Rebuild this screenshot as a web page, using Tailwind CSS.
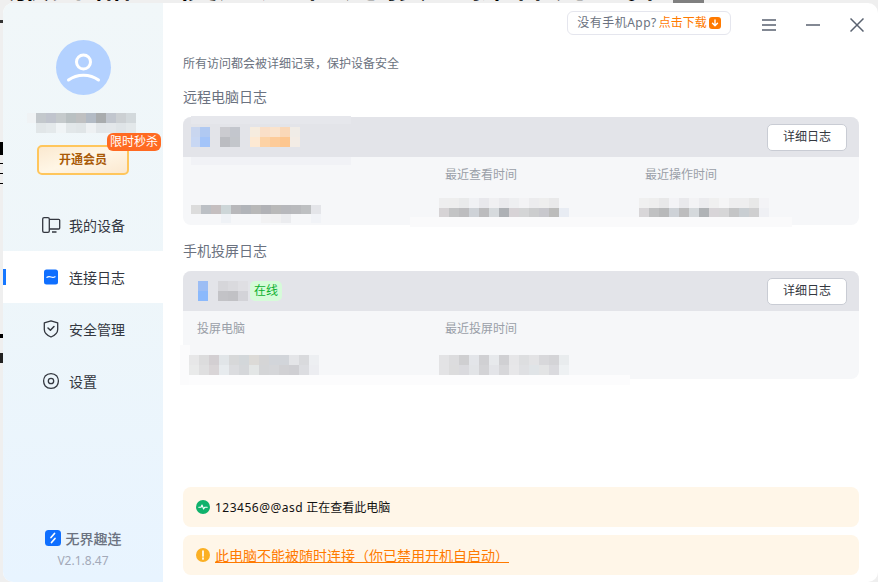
<!DOCTYPE html>
<html lang="zh-CN">

<head>
    <meta charset="UTF-8">
    <meta name="viewport" content="width=device-width, initial-scale=1.0">
    <script src="https://cdn.jsdelivr.net/npm/@tailwindcss/browser@4"></script>
    <title>连接日志</title>
</head>

<body class="relative h-[582px] w-[878px] overflow-hidden bg-[#efefef] font-['Noto_Sans','Noto_Sans_CJK_SC',sans-serif]">
    <!-- desktop behind the window, only slivers of it show -->
    <div class="absolute left-[8px] top-[-40px] whitespace-nowrap text-[42px] leading-[42px] text-black">服务器的使用远程连接的操作方式和</div>
    <div class="absolute left-[673px] top-0 h-[3px] w-[31px] bg-[#808080]"></div>
    <div class="absolute left-0 top-[20px] h-[3px] w-[3px] bg-[#333333]"></div>
    <div class="absolute left-0 top-[142px] h-[13px] w-[3px] bg-black"></div>
    <div class="absolute left-0 top-[163px] h-px w-[3px] bg-black"></div>
    <div class="absolute left-0 top-[173px] h-px w-[3px] bg-black"></div>
    <div class="absolute left-0 top-[183px] h-px w-[3px] bg-black"></div>
    <div class="absolute left-0 top-[334px] h-1 w-[3px] bg-black"></div>
    <div class="absolute left-0 top-[353px] h-[10px] w-[3px] bg-[#222222]"></div>

    <!-- window -->
    <div class="absolute bottom-0 left-[3px] right-0 top-[3px] flex overflow-hidden rounded-[10px] bg-white">
        <aside class="flex w-[160px] flex-col bg-gradient-to-b from-[#f1f7f9] via-[#eef6fa] to-[#e8f4ff]">
            <div class="mx-auto mt-[37px] flex h-[55px] w-[55px] items-center justify-center rounded-full bg-[#b3d1ff]">
                <svg width="35" height="35" viewBox="0 0 35 35" fill="none" stroke="white" stroke-width="3" stroke-linecap="round">
                    <circle cx="17.5" cy="12" r="7"></circle>
                    <path d="M2.5 30 C11 23.5 24 23.5 32.5 30"></path>
                </svg>
            </div>

            <div class="ml-[24px] mt-[18px] grid grid-cols-[9px_repeat(10,10px)] auto-rows-[10px]">
                <span class="bg-[#f0f3f5]"></span><span class="bg-[#c3c8cc]"></span><span class="bg-[#c0c4cd]"></span><span class="bg-[#c5cacc]"></span><span class="bg-[#b9c0c2]"></span><span class="bg-[#bfc0c1]"></span><span class="bg-[#b3bbc5]"></span><span class="bg-[#a9acae]"></span><span class="bg-[#c1c6ce]"></span><span class="bg-[#ccd0d3]"></span><span class="bg-[#d3d9dc]"></span>
                <span></span><span class="bg-[#e1e6e8]"></span><span class="bg-[#e4e9eb]"></span><span class="bg-[#f0f4f6]"></span><span class="bg-[#e2e7e9]"></span><span class="bg-[#e0e5e7]"></span><span class="bg-[#eef1f3]"></span><span class="bg-[#e2e6e9]"></span><span class="bg-[#e3e7ea]"></span><span class="bg-[#dfe4e7]"></span><span class="bg-[#e3e8ea]"></span>
            </div>

            <button type="button" class="relative mx-auto mt-3 h-[30px] w-[92px] rounded-[5px] border-2 border-[#ffc65c] bg-gradient-to-br from-[#fbe9d0] via-[#fff6e6] to-[#fbe8cf] text-[12px] font-bold text-[#a95a07]">
                开通会员
                <span class="absolute left-[68px] top-[-14px] h-[18px] w-[54px] rounded-[6px] bg-[#ff6a22] text-center text-[12px] font-normal leading-[18px] text-white">限时秒杀</span>
            </button>

            <nav class="mt-[24px] text-[14px] text-[#33373f]">
                <a class="flex h-[52px] items-center gap-2 pl-[38px]">
                    <svg width="20" height="20" viewBox="0 0 20 20" fill="none" stroke="#33373f" stroke-width="1.3">
                        <rect x="1.7" y="2.7" width="6.6" height="14.6" rx="1.4"></rect>
                        <path d="M8.3 4.3 H17.7 A1 1 0 0 1 18.7 5.3 V13 A1 1 0 0 1 17.7 14 H8.3"></path>
                        <path d="M11 17 H15.5"></path>
                    </svg>
                    我的设备
                </a>
                <a class="relative flex h-[52px] items-center gap-2 bg-white pl-[38px]">
                    <span class="absolute left-0 top-[18px] h-4 w-[3px] bg-[#1677ff]"></span>
                    <svg width="20" height="20" viewBox="0 0 20 20" fill="none">
                        <rect x="3" y="2.5" width="14" height="15" rx="2.5" fill="#0f6fff"></rect>
                        <path d="M6 10.3 C7.4 9.2 8.6 9.4 10 10 C11.4 10.6 12.6 10.7 14 9.8" stroke="white" stroke-width="1.3" stroke-linecap="round"></path>
                    </svg>
                    连接日志
                </a>
                <a class="flex h-[52px] items-center gap-2 pl-[38px]">
                    <svg width="20" height="20" viewBox="0 0 20 20" fill="none" stroke="#33373f" stroke-width="1.3" stroke-linejoin="round" stroke-linecap="round">
                        <path d="M10 1.8 L16.7 3.8 V10.5 C16.7 14 13.5 16.5 10 18 C6.5 16.5 3.3 14 3.3 10.5 V3.8 Z"></path>
                        <path d="M7 9 L9.4 11.3 L13 7.6" stroke-width="1.5"></path>
                    </svg>
                    安全管理
                </a>
                <a class="flex h-[52px] items-center gap-2 pl-[38px]">
                    <svg width="20" height="20" viewBox="0 0 20 20" fill="none" stroke="#33373f" stroke-width="1.3" stroke-linejoin="round">
                        <path d="M10 2.6 C11.5 2.6 14.5 3.6 15.8 5 C16.8 6.5 17.4 8.5 17.4 10 C17.4 11.5 16.8 13.5 15.8 15 C14.5 16.4 11.5 17.4 10 17.4 C8.5 17.4 5.5 16.4 4.2 15 C3.2 13.5 2.6 11.5 2.6 10 C2.6 8.5 3.2 6.5 4.2 5 C5.5 3.6 8.5 2.6 10 2.6 Z"></path>
                        <circle cx="10" cy="10" r="2.7"></circle>
                    </svg>
                    设置
                </a>
            </nav>

            <div class="mt-auto pb-[13px] text-center">
                <div class="flex h-5 items-center justify-center gap-[5px] text-[14px] font-medium text-[#6b7280]">
                    <svg width="16" height="16" viewBox="0 0 16 16">
                        <rect width="16" height="16" rx="3.5" fill="#0f6fff"></rect>
                        <path d="M9.5 3.5 L6 7.5 M10 8.5 L6.5 12.5" fill="none" stroke="white" stroke-width="1.7" stroke-linecap="round"></path>
                    </svg>
                    无界趣连
                </div>
                <div class="mt-[5px] h-4 text-[12px] leading-4 text-[#a3a9b8]">V2.1.8.47</div>
            </div>
        </aside>

        <main class="relative flex flex-1 flex-col pb-[7px] pl-[20px] pr-[19px]">
            <header class="-mr-[19px] flex h-[49px] shrink-0 items-start justify-end pr-[14px] pt-[8px]">
                <a class="mr-[31px] flex h-[24px] w-[164px] items-center justify-center gap-[2px] rounded-[6px] border border-[#e5e6ee] text-[12px] text-[#6b7280]">
                    <span class="tracking-[0.5px]">没有手机App?</span>
                    <span class="text-[#ff7a00]">点击下载</span>
                    <span class="flex h-3 w-3 items-center justify-center rounded-[3px] bg-[#ff7a00]">
                        <svg width="8" height="8" viewBox="0 0 8 8" fill="none" stroke="white" stroke-width="1.4" stroke-linecap="round" stroke-linejoin="round"><path d="M4 1 V6.5 M1.5 4.2 L4 6.8 L6.5 4.2"></path></svg>
                    </span>
                </a>
                <div class="flex gap-[30px] pt-[7px]">
                    <svg width="14" height="14" viewBox="0 0 14 14" stroke="#5a6270" stroke-width="1.5"><path d="M0 2 H14 M0 7 H14 M0 12 H14"></path></svg>
                    <svg width="14" height="14" viewBox="0 0 14 14" stroke="#5a6270" stroke-width="1.5"><path d="M0 7 H14"></path></svg>
                    <svg width="14" height="14" viewBox="0 0 14 14" stroke="#5a6270" stroke-width="1.5"><path d="M0.5 0.5 L13.5 13.5 M13.5 0.5 L0.5 13.5"></path></svg>
                </div>
            </header>

            <p class="h-6 text-[12px] leading-6 text-[#6b7280]">所有访问都会被详细记录，保护设备安全</p>

            <h2 class="mb-2 mt-[9px] h-6 text-[14px] font-normal leading-6 text-[#6b7280]">远程电脑日志</h2>
            <section class="relative h-[108px] rounded-[8px] bg-[#f6f7f9]">
                <div class="flex h-10 items-center justify-between rounded-t-[8px] bg-[#e3e4e9] pl-[8px] pr-3">
                    <div class="grid grid-cols-[9px_repeat(10,10px)] auto-rows-[10px]">
                        <span class="bg-[#c9d6ef]"></span><span class="bg-[#b0c9f2]"></span><span></span><span class="bg-[#cbcbd0]"></span><span class="bg-[#c3c6cd]"></span><span></span><span class="bg-[#f6ecdf]"></span><span class="bg-[#fadfc8]"></span><span class="bg-[#fae3cd]"></span><span class="bg-[#fad8b8]"></span><span class="bg-[#f0ece7]"></span>
                        <span class="bg-[#c8d7f3]"></span><span class="bg-[#a3c4f9]"></span><span></span><span class="bg-[#bbbcc1]"></span><span class="bg-[#c3c6cb]"></span><span></span><span class="bg-[#fde9d3]"></span><span class="bg-[#fdd2a5]"></span><span class="bg-[#fdcb99]"></span><span class="bg-[#fdc68f]"></span><span class="bg-[#f3ece5]"></span>
                    </div>
                    <button type="button" class="h-[27px] w-[80px] rounded-[5px] border border-[#c9ccd4] bg-white text-[12px] text-[#33373f]">详细日志</button>
                </div>
                <div class="grid grid-cols-[254px_200px_1fr] pl-[8px] text-[12px] text-[#9a9fa8]">
                    <span></span>
                    <span class="mt-2 h-5 leading-5">最近查看时间</span>
                    <span class="mt-2 h-5 leading-5">最近操作时间</span>
                    <div class="mt-[20px] grid h-[18px] w-[130px] grid-cols-[repeat(13,10px)] auto-rows-[9px]">
                        <span class="bg-[#dcdcdc]"></span><span class="bg-[#bcc0c5]"></span><span class="bg-[#c5bfc0]"></span><span class="bg-[#cdd6d8]"></span><span class="bg-[#b8b8bb]"></span><span class="bg-[#b1b4b9]"></span><span class="bg-[#b8b8b8]"></span><span class="bg-[#b1b2b6]"></span><span class="bg-[#b9b9b9]"></span><span class="bg-[#b7b8bc]"></span><span class="bg-[#b9babd]"></span><span class="bg-[#bec0c2]"></span><span class="bg-[#e4e5e9]"></span>
                        <span></span><span></span><span></span><span class="bg-[#eff2f6]"></span><span></span><span></span><span></span><span class="bg-[#f2f2f3]"></span><span class="bg-[#f1f1f2]"></span><span class="bg-[#ebecef]"></span><span></span><span></span><span class="bg-[#f1f3f7]"></span>
                    </div>
                    <div class="mt-[13px] -ml-[6px] grid h-5 w-[130px] grid-cols-[repeat(13,10px)] auto-rows-[10px]">
                        <span class="bg-[#eeeeef]"></span><span class="bg-[#eeeeee]"></span><span class="bg-[#e9eaeb]"></span><span class="bg-[#f0f1f4]"></span><span class="bg-[#e8e8ec]"></span><span class="bg-[#f0f0f2]"></span><span class="bg-[#eaeaed]"></span><span class="bg-[#eeeff1]"></span><span class="bg-[#f3f3f5]"></span><span class="bg-[#ececee]"></span><span class="bg-[#eeeeee]"></span><span class="bg-[#e9e9ea]"></span><span></span>
                        <span class="bg-[#d6d3d5]"></span><span class="bg-[#c3c4c5]"></span><span class="bg-[#bdbdbf]"></span><span class="bg-[#ced2d7]"></span><span class="bg-[#bcbcbe]"></span><span class="bg-[#d6dadd]"></span><span class="bg-[#aeb1b5]"></span><span class="bg-[#d7d3d6]"></span><span class="bg-[#d4d5d6]"></span><span class="bg-[#cccdce]"></span><span class="bg-[#c8c8cd]"></span><span class="bg-[#bcbcbb]"></span><span class="bg-[#e8ecf3]"></span>
                    </div>
                    <div class="mt-[13px] -ml-[6px] grid h-5 w-[130px] grid-cols-[repeat(13,10px)] auto-rows-[10px]">
                        <span class="bg-[#f0f0f0]"></span><span class="bg-[#eeeeee]"></span><span class="bg-[#e8e8e9]"></span><span class="bg-[#f3f3f6]"></span><span class="bg-[#e9e9ec]"></span><span class="bg-[#f3f3f5]"></span><span class="bg-[#ececef]"></span><span class="bg-[#f0f0f0]"></span><span class="bg-[#f5f5f6]"></span><span class="bg-[#eeeeef]"></span><span class="bg-[#eeeeef]"></span><span class="bg-[#e8e8e8]"></span><span class="bg-[#f3f3f6]"></span>
                        <span class="bg-[#d8d6d8]"></span><span class="bg-[#c0c1c2]"></span><span class="bg-[#b8b9ba]"></span><span class="bg-[#ced2d7]"></span><span class="bg-[#bdbdbe]"></span><span class="bg-[#d5d9dc]"></span><span class="bg-[#b0b3b6]"></span><span class="bg-[#d8d5d8]"></span><span class="bg-[#d6d6d7]"></span><span class="bg-[#c4c5c6]"></span><span class="bg-[#c9ced2]"></span><span class="bg-[#cfcfd0]"></span><span class="bg-[#eff0f4]"></span>
                    </div>
                </div>
                <!-- soft edge left by the mosaic -->
                <div class="absolute left-[8px] top-[-1px] h-2 w-[160px] bg-[#e6e7ec]"></div>
                <div class="absolute left-[8px] top-[40px] h-2 w-[160px] bg-[#f1f2f6]"></div>
                <div class="absolute left-[227px] top-[100px] h-[10px] w-[382px] bg-[#fafafb]"></div>
            </section>

            <h2 class="mb-2 mt-[14px] h-6 text-[14px] font-normal leading-6 text-[#6b7280]">手机投屏日志</h2>
            <section class="relative h-[108px] rounded-[8px] bg-[#f6f7f9]">
                <div class="flex h-10 items-center justify-between rounded-t-[8px] bg-[#e3e4e9] pl-[15px] pr-3">
                    <div class="flex items-center gap-[2px]">
                        <div class="grid grid-cols-[10px_10px_10px_10px_10px] auto-rows-[10px]">
                            <span class="bg-[#9cbdf4]"></span><span></span><span class="bg-[#d6d6da]"></span><span class="bg-[#dadade]"></span><span class="bg-[#dfdfe3]"></span>
                            <span class="bg-[#8bb9fc]"></span><span></span><span class="bg-[#c3c3c7]"></span><span class="bg-[#c1c1c5]"></span><span class="bg-[#d3d3d8]"></span>
                        </div>
                        <span class="h-5 w-8 rounded-[5px] bg-[#d6fbd9] text-center text-[12px] leading-5 text-[#0cb02f]">在线</span>
                    </div>
                    <button type="button" class="h-[27px] w-[80px] rounded-[5px] border border-[#c9ccd4] bg-white text-[12px] text-[#33373f]">详细日志</button>
                </div>
                <div class="relative z-10 grid grid-cols-[248px_200px_1fr] pl-[14px] text-[12px] text-[#9a9fa8]">
                    <span class="mt-2 h-5 leading-5">投屏电脑</span>
                    <span class="mt-2 h-5 leading-5">最近投屏时间</span>
                    <span></span>
                    <div class="mt-4 -ml-2 grid h-5 w-[130px] grid-cols-[repeat(13,10px)] auto-rows-[10px]">
                        <span class="bg-[#e7e7e8]"></span><span class="bg-[#dcdcdd]"></span><span class="bg-[#d3cfd2]"></span><span class="bg-[#e1e5e8]"></span><span class="bg-[#d7d8d9]"></span><span class="bg-[#d3d7da]"></span><span class="bg-[#dcdad7]"></span><span class="bg-[#d5d5d6]"></span><span class="bg-[#d2d5da]"></span><span class="bg-[#d2d5da]"></span><span class="bg-[#e4e5e8]"></span><span class="bg-[#d9dadd]"></span><span class="bg-[#edeff2]"></span>
                        <span class="bg-[#e9eaea]"></span><span class="bg-[#dfdfe0]"></span><span class="bg-[#d9d5d7]"></span><span class="bg-[#e7ebee]"></span><span class="bg-[#dbdcdf]"></span><span class="bg-[#d5d7da]"></span><span class="bg-[#e3e6e6]"></span><span class="bg-[#d4d5d7]"></span><span class="bg-[#d5d6d9]"></span><span class="bg-[#d1d1d4]"></span><span class="bg-[#cfcfd3]"></span><span class="bg-[#dcdde1]"></span><span class="bg-[#ecedf1]"></span>
                    </div>
                    <div class="mt-4 -ml-[6px] grid h-5 w-[130px] grid-cols-[repeat(13,10px)] auto-rows-[10px]">
                        <span class="bg-[#e3e3e5]"></span><span class="bg-[#dcdcde]"></span><span class="bg-[#cfcfd1]"></span><span class="bg-[#e3e5e9]"></span><span class="bg-[#d0d0d3]"></span><span class="bg-[#e7e9ec]"></span><span class="bg-[#d0d0d3]"></span><span class="bg-[#e6e6e8]"></span><span class="bg-[#dddee0]"></span><span class="bg-[#e3e3e5]"></span><span class="bg-[#d8d8db]"></span><span class="bg-[#d4d4d7]"></span><span class="bg-[#e9ecee]"></span>
                        <span class="bg-[#e3e3e5]"></span><span class="bg-[#dcdcdd]"></span><span class="bg-[#dadade]"></span><span class="bg-[#e2e4e7]"></span><span class="bg-[#d3d3d6]"></span><span class="bg-[#e3e4e8]"></span><span class="bg-[#d7d7da]"></span><span class="bg-[#e7e7e9]"></span><span class="bg-[#dfe0e3]"></span><span class="bg-[#e0e4e7]"></span><span class="bg-[#e3e4e5]"></span><span class="bg-[#dadade]"></span><span class="bg-[#eef1f3]"></span>
                    </div>
                </div>
                <div class="absolute left-[-3px] top-[74px] h-[40px] w-[10px] bg-[#fbfbfc]"></div>
                <div class="absolute left-[6px] top-[104px] h-[10px] w-[441px] bg-[#fcfcfd]"></div>
            </section>

            <div class="mt-auto flex h-10 items-center gap-[5px] rounded-[8px] bg-[#fff6e8] pl-[13px] text-[12px] text-[#111111]">
                <svg width="14" height="14" viewBox="0 0 14 14" fill="none">
                    <circle cx="7" cy="7" r="7" fill="#10b26c"></circle>
                    <path d="M2.8 7.2 H5 L6 5 L7.6 9 L8.7 7.2 H11.2" stroke="white" stroke-width="1.1" stroke-linecap="round" stroke-linejoin="round"></path>
                </svg>
                <span class="pt-[2px]"><span class="tracking-[0.5px]">123456@@asd</span> 正在查看此电脑</span>
            </div>
            <div class="mt-2 flex h-10 items-center gap-[5px] rounded-[8px] bg-[#fff6e8] pl-[13px] text-[14px] text-[#ff7a00]">
                <svg width="14" height="14" viewBox="0 0 14 14">
                    <circle cx="7" cy="7" r="7" fill="#fbb024"></circle>
                    <path d="M7 3 V8 M7 10 V11" fill="none" stroke="white" stroke-width="1.7" stroke-linecap="round"></path>
                </svg>
                <a class="underline underline-offset-1">此电脑不能被随时连接（你已禁用开机自启动）</a>
            </div>
        </main>
    </div>
</body>

</html>
